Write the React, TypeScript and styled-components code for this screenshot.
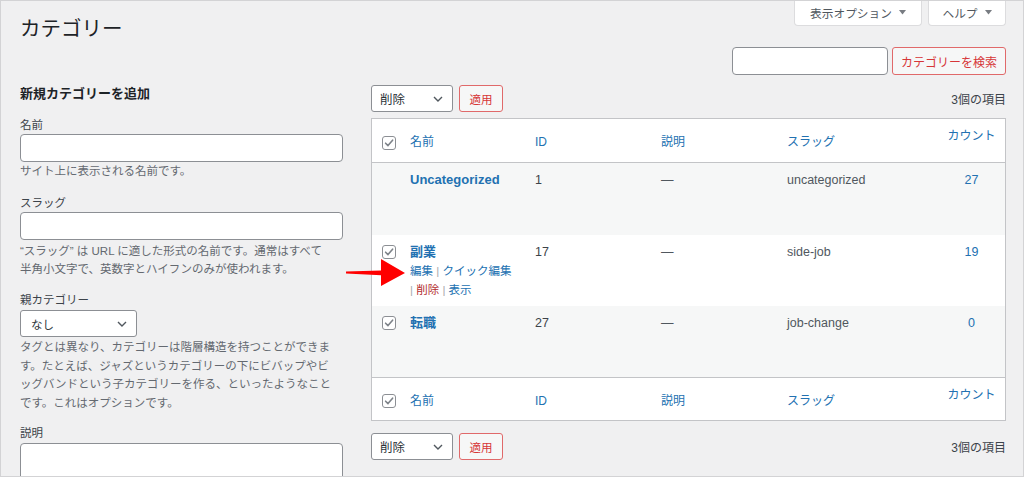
import React from 'react';
import styled, { createGlobalStyle } from 'styled-components';

const Global = createGlobalStyle`
  html, body { margin: 0; padding: 0; background: #f0f0f1; }
  body {
    font-family: "Liberation Sans", "Noto Sans CJK JP", sans-serif;
    color: #3c434a;
  }
  * { box-sizing: border-box; }
`;

const Frame = styled.div`
  position: relative;
  width: 1024px;
  height: 477px;
  border: 1px solid #d3d3d5;
  background: #f0f0f1;
  overflow: hidden;
  padding: 0 17px 0 19px;
`;

const Header = styled.div`
  display: flex;
  justify-content: space-between;
  align-items: flex-start;
  height: 46px;
`;

const Title = styled.h1`
  margin: 13px 0 0;
  font-size: 20.5px;
  font-weight: 400;
  line-height: 30px;
  color: #1d2327;
`;

const MetaTabs = styled.div`
  display: flex;
  gap: 6px;
  margin-top: -1px;
`;

const MetaTab = styled.div<{ $w: number }>`
  display: flex;
  align-items: center;
  justify-content: center;
  gap: 7px;
  width: ${(p) => p.$w}px;
  height: 26px;
  background: #fff;
  border: 1px solid #dcdcde;
  border-top: none;
  border-radius: 0 0 4px 4px;
  font-size: 11.7px;
  color: #50575e;
`;

const SearchRow = styled.div`
  display: flex;
  justify-content: flex-end;
  gap: 4px;
  height: 28px;
`;

const TextInput = styled.div<{ $w: number; $h?: number }>`
  width: ${(p) => p.$w}px;
  height: ${(p) => p.$h ?? 28}px;
  border: 1px solid #8c8f94;
  border-radius: 4px;
  background: #fff;
`;

const OutlineButton = styled.div<{ $w: number; $fs?: number }>`
  display: flex;
  align-items: center;
  justify-content: center;
  width: ${(p) => p.$w}px;
  height: ${(p) => (p.$w > 60 ? 28 : 27)}px;
  border: 1px solid #e0696a;
  border-radius: 3px;
  background: #f6f7f7;
  color: #d63638;
  font-size: ${(p) => p.$fs ?? 12}px;
`;

const Columns = styled.div`
  display: flex;
  gap: 28px;
  margin-top: 10px;
`;

const LeftCol = styled.div`
  width: 323px;
  flex: none;
`;

const RightCol = styled.div`
  width: 635px;
  flex: none;
`;

const FormTitle = styled.h2`
  margin: 0;
  font-size: 13px;
  font-weight: 700;
  line-height: 18px;
  color: #1d2327;
`;

const FieldGroup = styled.div<{ $mt?: number }>`
  margin-top: ${(p) => p.$mt ?? 13}px;
`;

const Label = styled.div`
  font-size: 11.5px;
  line-height: 18px;
  color: #3c434a;
`;

const Desc = styled.p<{ $mt?: number; $lh?: number }>`
  margin: ${(p) => p.$mt ?? 0}px 0 0;
  font-size: 11.5px;
  line-height: ${(p) => p.$lh ?? 19}px;
  color: #646970;
  white-space: nowrap;
`;

const SelectBox = styled.div<{ $w: number; $pl: number; $fs: number }>`
  display: flex;
  align-items: center;
  justify-content: space-between;
  width: ${(p) => p.$w}px;
  height: 27px;
  padding: 0 9px 0 ${(p) => p.$pl}px;
  border: 1px solid #8c8f94;
  border-radius: 3px;
  background: #fff;
  font-size: ${(p) => p.$fs}px;
  color: #2c3338;
`;

const Spaced = styled.div<{ $mt: number }>`
  margin-top: ${(p) => p.$mt}px;
`;

const TextArea = styled.div`
  width: 323px;
  height: 70px;
  margin-top: 1px;
  border: 1px solid #8c8f94;
  border-radius: 4px;
  background: #fff;
`;

const NavBar = styled.div<{ $mt: number }>`
  display: flex;
  align-items: center;
  gap: 6px;
  height: 27px;
  margin-top: ${(p) => p.$mt}px;
`;

const ItemCount = styled.span`
  margin-left: auto;
  font-size: 12px;
  color: #3c434a;
`;

const Table = styled.div`
  margin-top: 6px;
  border: 1px solid #c3c4c7;
  background: #fff;
`;

const Row = styled.div<{ $alt?: boolean; $h: number; $head?: 'top' | 'bottom' }>`
  display: grid;
  grid-template-columns: 28px 125px 126px 126px 161px 1fr;
  height: ${(p) => p.$h}px;
  background: ${(p) => (p.$alt ? '#f6f7f7' : '#fff')};
  border-bottom: ${(p) => (p.$head === 'top' ? '1px solid #c3c4c7' : 'none')};
  border-top: ${(p) => (p.$head === 'bottom' ? '1px solid #c3c4c7' : 'none')};
`;

const CbCell = styled.div<{ $pt: number }>`
  padding: ${(p) => p.$pt}px 0 0 10px;
`;

const HeadCell = styled.div<{ $num?: boolean }>`
  padding: ${(p) => (p.$num ? '8px 0 0' : '14px 0 0 10px')};
  text-align: ${(p) => (p.$num ? 'center' : 'left')};
  font-size: 12px;
  line-height: 18px;
  color: #2271b1;
`;

const Cell = styled.div<{ $num?: boolean; $muted?: boolean }>`
  padding: ${(p) => (p.$num ? '8px 0 0' : '8px 0 0 10px')};
  text-align: ${(p) => (p.$num ? 'center' : 'left')};
  font-size: 12.5px;
  line-height: 18px;
  color: ${(p) => (p.$num ? '#2271b1' : p.$muted ? '#50575e' : '#3c434a')};
`;

const RowTitle = styled.div`
  font-size: 13px;
  font-weight: 700;
  line-height: 18px;
  color: #2271b1;
`;

const Actions = styled.div`
  margin-top: 1px;
  font-size: 11.5px;
  line-height: 19px;
  color: #2271b1;
  white-space: nowrap;
`;

const Sep = styled.span`
  color: #a7aaad;
`;

const DeleteLink = styled.span`
  color: #b32d2e;
`;

const Box = styled.span`
  display: block;
  width: 14px;
  height: 14px;
  border: 1px solid #8c8f94;
  border-radius: 3px;
  background: #fff;
  svg { display: block; }
`;

const ArrowMark = styled.svg`
  position: absolute;
  left: 343px;
  top: 255px;
`;

const Caret = () => (
  <svg width="7" height="5" viewBox="0 0 7 5">
    <polygon points="0,0 7,0 3.5,4.6" fill="#787c82" />
  </svg>
);

const Chevron = () => (
  <svg width="10" height="6" viewBox="0 0 10 6">
    <path d="M1 1 L5 5 L9 1" fill="none" stroke="#50575e" strokeWidth="1.4" />
  </svg>
);

const Check = () => (
  <Box>
    <svg width="12" height="12" viewBox="0 0 12 12">
      <path d="M2.6 6.2 L5 8.6 L9.6 3.2" fill="none" stroke="#7e8389" strokeWidth="1.6" strokeLinecap="round" strokeLinejoin="round" />
    </svg>
  </Box>
);

const HeaderRow = ({ pos }: { pos: 'top' | 'bottom' }) => (
  <Row $h={pos === 'top' ? 44 : 43} $head={pos}>
    <CbCell $pt={pos === 'top' ? 17 : 16}>
      <Check />
    </CbCell>
    <HeadCell>名前</HeadCell>
    <HeadCell>ID</HeadCell>
    <HeadCell>説明</HeadCell>
    <HeadCell>スラッグ</HeadCell>
    <HeadCell $num>カウント</HeadCell>
  </Row>
);

type Term = { name: string; id: string; slug: string; count: string; h: number; alt: boolean; cb: boolean; actions?: boolean };

const terms: Term[] = [
  { name: 'Uncategorized', id: '1', slug: 'uncategorized', count: '27', h: 72, alt: true, cb: false },
  { name: '副業', id: '17', slug: 'side-job', count: '19', h: 71, alt: false, cb: true, actions: true },
  { name: '転職', id: '27', slug: 'job-change', count: '0', h: 71, alt: true, cb: true },
];

const BulkBar = ({ mt }: { mt: number }) => (
  <NavBar $mt={mt}>
    <SelectBox $w={82} $pl={8} $fs={12.5}>
      <span>削除</span>
      <Chevron />
    </SelectBox>
    <OutlineButton $w={44} $fs={11.5}>適用</OutlineButton>
    <ItemCount>3個の項目</ItemCount>
  </NavBar>
);

export default function App() {
  return (
    <>
      <Global />
      <Frame>
        <Header>
          <Title>カテゴリー</Title>
          <MetaTabs>
            <MetaTab $w={128}>
              表示オプション <Caret />
            </MetaTab>
            <MetaTab $w={78}>
              ヘルプ <Caret />
            </MetaTab>
          </MetaTabs>
        </Header>
        <SearchRow>
          <TextInput $w={156} />
          <OutlineButton $w={114}>カテゴリーを検索</OutlineButton>
        </SearchRow>
        <Columns>
          <LeftCol>
            <FormTitle>新規カテゴリーを追加</FormTitle>
            <FieldGroup>
              <Label>名前</Label>
              <TextInput $w={323} />
              <Desc>サイト上に表示される名前です。</Desc>
            </FieldGroup>
            <FieldGroup>
              <Label>スラッグ</Label>
              <TextInput $w={323} />
              <Desc $mt={1.5} $lh={18.5}>
                “スラッグ” は URL に適した形式の名前です。通常はすべて
                <br />
                半角小文字で、英数字とハイフンのみが使われます。
              </Desc>
            </FieldGroup>
            <FieldGroup $mt={12.5}>
              <Label>親カテゴリー</Label>
              <Spaced $mt={1}>
                <SelectBox $w={117} $pl={10} $fs={11.5}>
                  <span>なし</span>
                  <Chevron />
                </SelectBox>
              </Spaced>
              <Desc $mt={1} $lh={18.5}>
                タグとは異なり、カテゴリーは階層構造を持つことができま
                <br />
                す。たとえば、ジャズというカテゴリーの下にビバップやビ
                <br />
                ッグバンドという子カテゴリーを作る、といったようなこと
                <br />
                です。これはオプションです。
              </Desc>
            </FieldGroup>
            <FieldGroup $mt={12}>
              <Label>説明</Label>
              <TextArea />
            </FieldGroup>
          </LeftCol>
          <RightCol>
            <BulkBar mt={0} />
            <Table>
              <HeaderRow pos="top" />
              {terms.map((t) => (
                <Row key={t.id} $h={t.h} $alt={t.alt}>
                  <CbCell $pt={10}>{t.cb && <Check />}</CbCell>
                  <Cell>
                    <RowTitle>{t.name}</RowTitle>
                    {t.actions && (
                      <Actions>
                        編集 <Sep>|</Sep> クイック編集
                        <br />
                        <Sep>|</Sep> <DeleteLink>削除</DeleteLink> <Sep>|</Sep> 表示
                      </Actions>
                    )}
                  </Cell>
                  <Cell>{t.id}</Cell>
                  <Cell $muted>—</Cell>
                  <Cell $muted>{t.slug}</Cell>
                  <Cell $num>{t.count}</Cell>
                </Row>
              ))}
              <HeaderRow pos="bottom" />
            </Table>
            <BulkBar mt={12} />
          </RightCol>
        </Columns>
        <ArrowMark width="64" height="34" viewBox="0 0 64 34">
          <polygon points="2,15.6 37,14.4 37,3 61,17 37,30 37,19.2 2,17.6" fill="#f00" />
        </ArrowMark>
      </Frame>
    </>
  );
}
